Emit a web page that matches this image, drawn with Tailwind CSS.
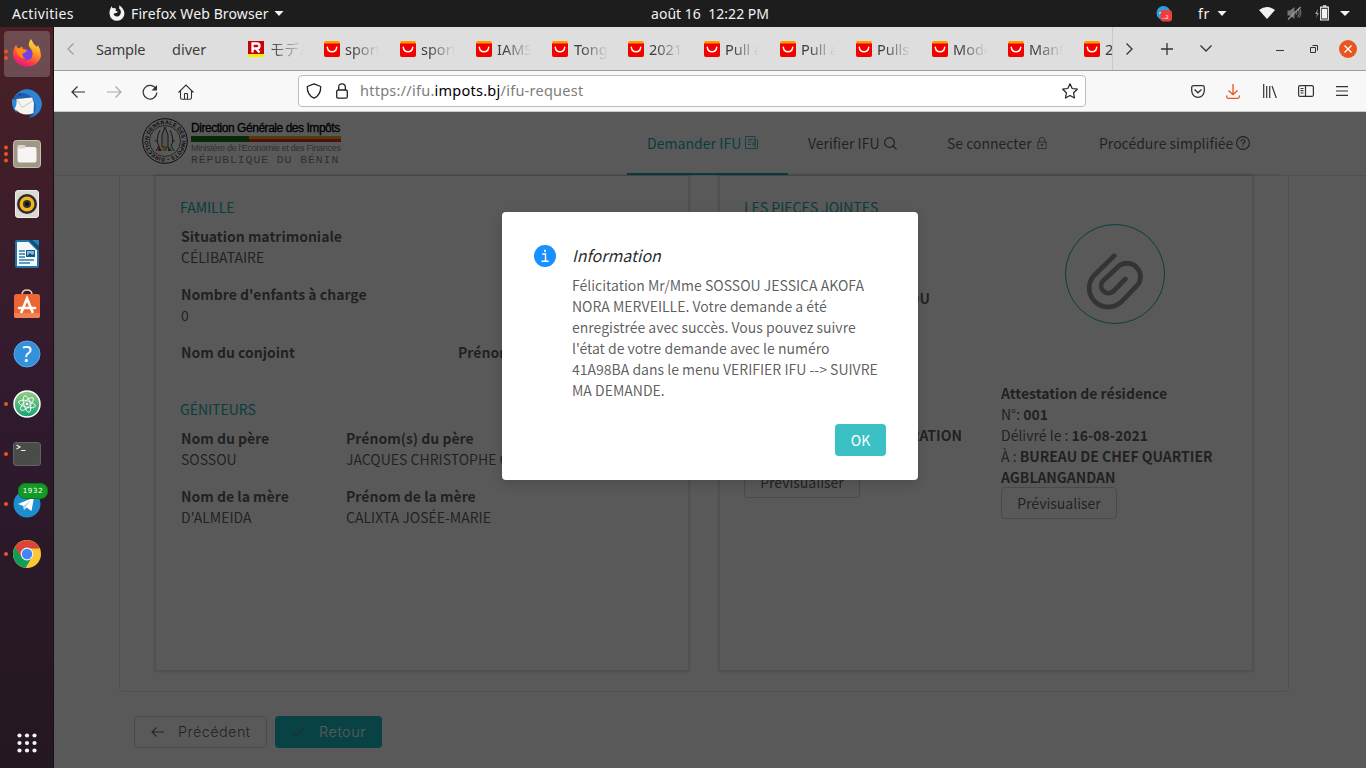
<!DOCTYPE html>
<html lang="fr">
<head>
<meta charset="utf-8">
<title>ifu-request</title>
<script src="https://cdn.jsdelivr.net/npm/@tailwindcss/browser@4"></script>
</head>
<body class="w-[1366px] h-[768px] overflow-hidden flex flex-col bg-[#595959] font-['Noto_Sans','Noto_Sans_CJK_JP',sans-serif]">
<svg class="hidden">
  <symbol id="ali" viewBox="0 0 16 16"><rect width="16" height="16" rx="2" fill="#ff9a00"/><path d="M0 2.500H16V14a2 2 0 0 1-2 2H2a2 2 0 0 1-2-2Z" fill="#f20000"/><path d="M3.300 6.300C4 12.200 12 12.200 12.700 6.300" fill="none" stroke="#fff" stroke-width="1.500" stroke-linecap="round"/></symbol>
</svg>

<!-- system bar -->
<header class="h-[27px] shrink-0 bg-[#1d1d1d] text-[#f2f2f2] text-[14px] leading-[26px] flex items-center whitespace-nowrap">
  <div class="w-[97px] ml-3 tracking-[0.35px]">Activities</div>
  <svg class="w-4 h-4 mt-[-1px] mr-[6px]" viewBox="0 0 16 16"><path d="M1.500 3.500Q.2 6.300.6 9A7.400 7.100 0 0 0 15.400 8.500C15.500 5.500 13.500 2.500 10.300.2Q10.500 2 10 3.200C12.500 5.500 12.200 8 10.800 10.200C9 12.200 5.500 11.600 4.700 9.500Q4.500 8.300 6 8.200Q8.500 8 8.800 6.500Q6.500 6.400 6.300 5.300L7.300 4Q5.500 2.800 4 3.200Q2.800 2.800 2.700 1Z" fill="#f2f2f2"/></svg>
  <div class="w-[143px] tracking-[0.12px]">Firefox Web Browser</div>
  <svg class="w-[10px] h-[5px]" viewBox="0 0 9 5"><path d="M0 0H9L4.500 5Z" fill="#f2f2f2"/></svg>
  <div class="ml-[367px] w-[505px] whitespace-pre tracking-[0.03px]">août 16  12:22 PM</div>
  <svg class="w-4 h-4" viewBox="0 0 16 16"><circle cx="7.500" cy="7" r="7" fill="#2aa1de"/><rect x="4.500" y="4" width="11.500" height="11.500" rx="3" fill="#f33d3a"/><path d="M3 7.500l2-1" stroke="#fff"/><text x="6" y="12.500" font-size="6" fill="#fff">..2</text></svg>
  <div class="ml-[26px] w-[19px] tracking-[0.6px]">fr</div>
  <svg class="w-[10px] h-[5px]" viewBox="0 0 9 5"><path d="M0 0H9L4.500 5Z" fill="#f2f2f2"/></svg>
  <svg class="ml-[32px] mt-[-1px] w-4 h-3" viewBox="0 0 16 12"><path d="M0 3Q8-3 16 3L8 12Z" fill="#f2f2f2"/></svg>
  <svg class="ml-[12px] mt-[-1px] w-[15px] h-[14px]" viewBox="0 0 15 14"><path d="M.5 4.500H3L7.500 1V13L3 9.500H.5Z" fill="#777"/><path d="M9 5q1.500 2 0 4M10.500 3q3.500 4 0 8M12.500 2q3 5-.5 10" stroke="#666" stroke-width="1.200" fill="none"/><path d="M1 13.500L13.500 1" stroke="#999" stroke-width="1.200"/></svg>
  <svg class="ml-[12px] mt-[-2px] w-[16px] h-4" viewBox="0 0 16 16"><path d="M4 4L1 9h2l-1 4 3-5H3.200Z" fill="#999"/><path d="M6.700 2.200H14.300V15H6.700Z" fill="none" stroke="#f2f2f2" stroke-width="1.200"/><path d="M8 3.800h5V13.500H8Z" fill="#f2f2f2"/><path d="M9 1h3.500" stroke="#f2f2f2" stroke-width="1.500"/></svg>
  <svg class="ml-[10px] w-[10px] h-[5px]" viewBox="0 0 10 5"><path d="M0 0H10L5 5Z" fill="#f2f2f2"/></svg>
</header>

<div class="flex flex-1 min-h-0">
  <!-- dock -->
  <aside class="w-[54px] shrink-0 pt-[2px] bg-linear-to-b from-[#4a2025] via-[#301a2e] to-[#231720] border-r border-[#1c1018] flex flex-col items-center">
    <div class="relative w-[53px] h-[50px] shrink-0 flex items-center justify-center">
      <div class="w-[46px] h-[46px] rounded bg-white/20 flex items-center justify-center">
        <svg class="w-[30px] h-[30px]" viewBox="0 0 30 30"><defs><linearGradient id="fx" x1=".8" y1="0" x2=".3" y2="1"><stop offset="0" stop-color="#fff04a"/><stop offset=".4" stop-color="#ff9a1f"/><stop offset=".75" stop-color="#ff3b47"/><stop offset="1" stop-color="#e0128c"/></linearGradient></defs><path d="M4 6L6 10L10 7.500L11 10L15 11Q15 14 11 15Q13 20 18 18Q23 14 18 9Q15 5 19 0Q21 5 25 8L26 6Q29 11 29 17A14.200 13.500 0 0 1 1 16Q1 10 4 6Z" fill="url(#fx)"/><circle cx="15" cy="15.500" r="5.500" fill="#7542e5"/><path d="M4 10Q8 8 10 10L15 11Q14 14 10.500 14.500Q10 18 14 20Q7 19 5 14Z" fill="#ff8a16"/></svg>
      </div>
      <svg class="absolute left-1 top-[18px] w-1 h-4" viewBox="0 0 4 16"><circle cx="2" cy="4.500" r="2" fill="#e95420"/><circle cx="2" cy="11" r="2" fill="#e95420"/></svg>
    </div>
    <div class="h-[50px] shrink-0 flex items-center"><svg class="w-[30px] h-[30px]" viewBox="0 0 30 30"><path d="M8 3Q12-1 20 1Q30 5 30 16Q29 26 17 29.500Q18 26 21 23L12 9L1 11Q2 6 8 3Z" fill="#1b5fae"/><path d="M0 12Q3 3 12 4Q20 6 23 14Q25 22 20 28Q29 24 30 15Q28 4 19 1Q11-1 7 3Q1 7 0 12Z" fill="#2f83d0"/><path d="M0 10Q-1 19 5 24L4 19L5 11Z" fill="#2d8ad8"/><path d="M4.500 10L20 8.500L22 14L21.500 24Q15 27 8 24L2.500 20Q5 16 4.500 10Z" fill="#f4f4f1"/><path d="M5 10.500L10 18.500L20.500 12" fill="none" stroke="#c4c2be" stroke-width=".9"/><circle cx="8" cy="5.500" r="1" fill="#123c74"/></svg></div>
    <div class="relative w-[53px] h-[50px] shrink-0 flex items-center justify-center"><svg class="w-[28px] h-[28px]" viewBox="0 0 28 28"><rect x=".5" y=".5" width="27" height="27" rx="3" fill="#a09887" stroke="#c6bfb0"/><path d="M4.500 7q0-2 2-2H11l2 2h8.500q2 0 2 2V20q0 2.500-2 2.500H6.500q-2 0-2-2.500Z" fill="#f6f5f3"/><path d="M4.500 8.500V7q0-2 2-2H11l2 2-2 1.500Z" fill="#dcd6ca"/></svg>
      <svg class="absolute left-1 top-[16px] w-1 h-[18px]" viewBox="0 0 4 18"><circle cx="2" cy="2.500" r="2" fill="#e95420"/><circle cx="2" cy="9" r="2" fill="#e95420"/><circle cx="2" cy="15.500" r="2" fill="#e95420"/></svg></div>
    <div class="h-[50px] shrink-0 flex items-center"><svg class="w-[24px] h-[28px]" viewBox="0 0 24 28"><rect x=".5" y=".5" width="23" height="27" rx="2.500" fill="#dcd9d2" stroke="#eee"/><circle cx="12" cy="14" r="10" fill="#2b2b2b"/><circle cx="12" cy="14" r="7.500" fill="#f2b51d"/><circle cx="12" cy="14" r="4" fill="#333"/><circle cx="12" cy="14" r="2" fill="#111"/></svg></div>
    <div class="h-[50px] shrink-0 flex items-center"><svg class="w-[24px] h-[28px]" viewBox="0 0 24 28"><path d="M1 2Q1 1 2 1H14L23 10V26Q23 27 22 27H2Q1 27 1 26Z" fill="#f4f8fa" stroke="#1c77a8" stroke-width="2"/><path d="M14 0H24V11Z" fill="#124c70"/><path d="M17 0H24V6Z" fill="#2584b6"/><path d="M4 11H10M4 14H10M4 17H10M4 20H19M4 23H15" stroke="#2e7ca8" stroke-width="1.500"/><rect x="11.500" y="10.500" width="8" height="6" fill="#7db9d8" stroke="#1a587f"/><path d="M12 16l3-3 2 2 2-1v2Z" fill="#164f73"/></svg></div>
    <div class="h-[50px] shrink-0 flex items-center"><svg class="w-[28px] h-[30px]" viewBox="0 0 28 30"><path d="M9 6Q9 1 14 1T19 6" fill="none" stroke="#dfcdb0" stroke-width="1.500"/><rect x="1" y="5" width="26" height="24" rx="2.500" fill="#ec6532"/><path d="M1 24H27V27Q27 29 25 29H3Q1 29 1 27Z" fill="#f08255"/><path d="M8.500 23L14 9.500L19.500 23M6 19H22" fill="none" stroke="#fff" stroke-width="2.600" stroke-linecap="round"/></svg></div>
    <div class="h-[50px] shrink-0 flex items-center"><svg class="w-[28px] h-[28px]" viewBox="0 0 28 28"><circle cx="14" cy="14" r="13" fill="#3391dc" stroke="#5aa9e6"/><text x="14" y="22" font-size="22" text-anchor="middle" fill="#fff">?</text></svg></div>
    <div class="relative w-[53px] h-[50px] shrink-0 flex items-center justify-center"><svg class="w-[28px] h-[28px]" viewBox="0 0 28 28"><defs><linearGradient id="at" x1="0" y1="0" x2="0" y2="1"><stop stop-color="#97cd83"/><stop offset="1" stop-color="#14a376"/></linearGradient></defs><circle cx="14" cy="14" r="13" fill="url(#at)" stroke="#fff" stroke-width="1.500"/><g fill="none" stroke="#fff" stroke-width=".9"><ellipse cx="14" cy="14" rx="8.500" ry="3.200" transform="rotate(15 14 14)"/><ellipse cx="14" cy="14" rx="8.500" ry="3.200" transform="rotate(75 14 14)"/><ellipse cx="14" cy="14" rx="8.500" ry="3.200" transform="rotate(135 14 14)"/></g><circle cx="14" cy="14" r="1.300" fill="#fff"/></svg><i class="absolute left-1 top-[23px] w-1 h-1 rounded-full bg-[#e95420]"></i></div>
    <div class="relative w-[53px] h-[50px] shrink-0 flex items-center justify-center"><svg class="w-[28px] h-[24px]" viewBox="0 0 28 24"><rect x=".5" y=".5" width="27" height="23" rx="2.500" fill="#4a4c49" stroke="#60625f"/><path d="M3.500 3L7 5L3.500 7M8 8.500H12.500" fill="none" stroke="#eee" stroke-width="1.200"/></svg><i class="absolute left-1 top-[23px] w-1 h-1 rounded-full bg-[#e95420]"></i></div>
    <div class="relative w-[53px] h-[50px] shrink-0 flex items-center justify-center"><svg class="w-[28px] h-[28px]" viewBox="0 0 28 28"><circle cx="14" cy="14" r="13.500" fill="#1d8fd0"/><path d="M5 14L21 7.500L18.500 21L13.500 17.500L11 20L10.500 16Z" fill="#fff"/><path d="M10.500 16L18 10L12.500 17L11 20Z" fill="#b8d8ea"/></svg><i class="absolute left-1 top-[23px] w-1 h-1 rounded-full bg-[#e95420]"></i>
      <div class="absolute left-[18px] top-[4px] w-[30px] h-[16px] rounded-[7px] bg-[#149a24] border border-[#0c7a18] text-white text-[7px] leading-[15px] text-center tracking-[0.7px] font-['DejaVu_Sans',sans-serif]">1932</div></div>
    <div class="relative w-[53px] h-[50px] shrink-0 flex items-center justify-center"><svg class="w-[28px] h-[28px]" viewBox="0 0 28 28"><circle cx="14" cy="14" r="14" fill="#fbc734"/><path d="M1.900 7A14 14 0 0 1 26.100 7.200L26.500 8.500H14L8 18Z" fill="#dc4437"/><path d="M1.900 7A14 14 0 0 0 12.500 27.900L19 17L8.500 17Z" fill="#109d58"/><circle cx="14" cy="14" r="6.400" fill="#f1f1f1"/><circle cx="14" cy="14" r="5.200" fill="#4285f4"/></svg><i class="absolute left-1 top-[23px] w-1 h-1 rounded-full bg-[#e95420]"></i></div>
    <svg class="mt-auto mb-[15px] w-5 h-5" viewBox="0 0 20 20" fill="#f4f4f4"><circle cx="2.500" cy="2.500" r="2.100"/><circle cx="10" cy="2.500" r="2.100"/><circle cx="17.500" cy="2.500" r="2.100"/><circle cx="2.500" cy="10" r="2.100"/><circle cx="10" cy="10" r="2.100"/><circle cx="17.500" cy="10" r="2.100"/><circle cx="2.500" cy="17.500" r="2.100"/><circle cx="10" cy="17.500" r="2.100"/><circle cx="17.500" cy="17.500" r="2.100"/></svg>
  </aside>

  <div class="flex-1 min-w-0 flex flex-col">
    <!-- tab strip -->
    <div class="h-[44px] shrink-0 bg-[#dedede] border-b border-[#9e9e9e] flex items-center text-[14.500px] text-[#3d3d3d] whitespace-nowrap">
      <svg class="ml-[13px] w-[7px] h-3" viewBox="0 0 7 12"><path d="M6.500.5L1 6L6.500 11.500" fill="none" stroke="#9a9a9a" stroke-width="1.200"/></svg>
      <div class="ml-[22px] mt-[2px] w-[76px] text-[14.5px] tracking-[-0.2px]">Sample</div>
      <div class="w-[76px] mt-[2px] text-[14.5px]">diver</div>
      <div class="w-[865px] h-full flex items-center overflow-hidden border-r border-[#c8c8c8] text-[14.5px]">
        <div class="w-[76px] shrink-0 flex items-center"><svg class="w-4 h-4 shrink-0" viewBox="0 0 16 16"><path d="M0 0H16V13H0Z" fill="#c8000a"/><path d="M0 13H16V16H0Z" fill="#f7ef00"/><path d="M4.500 11.500V2.500H9Q11.500 2.500 11.500 5T9 7.500H5M8 7.500L11.500 11.500" fill="none" stroke="#fff" stroke-width="2.300"/></svg><div class="ml-[6px] mt-[2px] w-[34px] overflow-hidden mask-r-from-0%">モデル</div></div>
        <div class="w-[76px] shrink-0 flex items-center"><svg class="w-4 h-4 shrink-0"><use href="#ali"/></svg><div class="ml-[5px] mt-[2px] w-[34px] overflow-hidden mask-r-from-20%">sport</div></div>
        <div class="w-[76px] shrink-0 flex items-center"><svg class="w-4 h-4 shrink-0"><use href="#ali"/></svg><div class="ml-[5px] mt-[2px] w-[34px] overflow-hidden mask-r-from-20%">sport</div></div>
        <div class="w-[76px] shrink-0 flex items-center"><svg class="w-4 h-4 shrink-0"><use href="#ali"/></svg><div class="ml-[5px] mt-[2px] w-[34px] overflow-hidden mask-r-from-20%">IAMS</div></div>
        <div class="w-[76px] shrink-0 flex items-center"><svg class="w-4 h-4 shrink-0"><use href="#ali"/></svg><div class="ml-[6px] mt-[2px] w-[34px] overflow-hidden mask-r-from-20%">Tong</div></div>
        <div class="w-[76px] shrink-0 flex items-center"><svg class="w-4 h-4 shrink-0"><use href="#ali"/></svg><div class="ml-[5px] mt-[2px] w-[34px] overflow-hidden mask-r-from-20%">2021</div></div>
        <div class="w-[76px] shrink-0 flex items-center"><svg class="w-4 h-4 shrink-0"><use href="#ali"/></svg><div class="ml-[5px] mt-[2px] w-[34px] overflow-hidden mask-r-from-20%">Pull a</div></div>
        <div class="w-[76px] shrink-0 flex items-center"><svg class="w-4 h-4 shrink-0"><use href="#ali"/></svg><div class="ml-[5px] mt-[2px] w-[34px] overflow-hidden mask-r-from-20%">Pull a</div></div>
        <div class="w-[76px] shrink-0 flex items-center"><svg class="w-4 h-4 shrink-0"><use href="#ali"/></svg><div class="ml-[5px] mt-[2px] w-[34px] overflow-hidden mask-r-from-20%">Pulls</div></div>
        <div class="w-[76px] shrink-0 flex items-center"><svg class="w-4 h-4 shrink-0"><use href="#ali"/></svg><div class="ml-[5px] mt-[2px] w-[34px] overflow-hidden mask-r-from-20%">Mode</div></div>
        <div class="w-[76px] shrink-0 flex items-center"><svg class="w-4 h-4 shrink-0"><use href="#ali"/></svg><div class="ml-[5px] mt-[2px] w-[34px] overflow-hidden mask-r-from-20%">Mant</div></div>
        <div class="w-[76px] shrink-0 flex items-center"><svg class="w-4 h-4 shrink-0"><use href="#ali"/></svg><div class="ml-[5px] mt-[2px] w-[34px]">2</div></div>
      </div>
      <svg class="ml-[13px] w-[7px] h-3" viewBox="0 0 7 12"><path d="M.5.5L6 6L.5 11.500" fill="none" stroke="#333" stroke-width="1.300"/></svg>
      <svg class="ml-[28px] w-3 h-3" viewBox="0 0 12 12"><path d="M6 0V12M0 6H12" stroke="#333" stroke-width="1.300"/></svg>
      <svg class="ml-[27px] w-3 h-[7px]" viewBox="0 0 12 7"><path d="M.5.5L6 6L11.500.5" fill="none" stroke="#333" stroke-width="1.300"/></svg>
      <svg class="ml-[64px] mt-[5px] w-2 h-2" viewBox="0 0 8 8"><path d="M0 3.500H8" stroke="#333"/></svg>
      <svg class="ml-[26px] w-2 h-2" viewBox="0 0 8 8"><path d="M.5 2.500H5.500V7.500H.5ZM2.500.5H7.500V5.500" fill="none" stroke="#333"/></svg>
      <svg class="ml-[21px] w-[18px] h-[18px]" viewBox="0 0 18 18"><circle cx="9" cy="9" r="9" fill="#e95420"/><path d="M5.500 5.500L12.500 12.500M12.500 5.500L5.500 12.500" stroke="#fff" stroke-width="1.400"/></svg>
    </div>
    <!-- toolbar -->
    <div class="h-[41px] shrink-0 bg-[#f8f8f8] border-b border-[#c9cccd] flex items-center">
      <svg class="ml-[17px] mt-px w-[15px] h-3" viewBox="0 0 15 12" fill="none" stroke="#333" stroke-width="1.200"><path d="M6.500.5L1 6L6.500 11.500M1 6H14"/></svg>
      <svg class="ml-[21px] mt-px w-[15px] h-3" viewBox="0 0 15 12" fill="none" stroke="#aaa" stroke-width="1.200"><path d="M8.500.5L14 6L8.500 11.500M14 6H0"/></svg>
      <svg class="ml-[20px] mt-px w-4 h-4" viewBox="0 0 16 16"><path d="M14 5A6.800 6.800 0 1 0 14.800 8.500" fill="none" stroke="#333" stroke-width="1.200"/><path d="M15 1V6.500H9.500Z" fill="#333"/></svg>
      <svg class="ml-[20px] mt-px w-4 h-4" viewBox="0 0 16 16" fill="none" stroke="#333" stroke-width="1.100"><path d="M.5 8.500L8 1L15.500 8.500M2.500 7V13.500Q2.500 15.300 4.300 15.300H11.700Q13.500 15.300 13.500 13.500V7M6.500 15V10Q6.500 9.500 7 9.500H9Q9.500 9.500 9.500 10V15"/></svg>
      <div class="ml-[104px] w-[788px] h-[32px] rounded bg-white border border-[#bdbdbd] flex items-center">
        <svg class="ml-[7px] w-4 h-4" viewBox="0 0 16 16" fill="none" stroke="#222" stroke-width="1.300"><path d="M8 .8L14.700 3.500Q15 12 8 15.200Q1 12 1.300 3.500Z" stroke-linejoin="round"/></svg>
        <svg class="ml-[14px] w-3 h-4" viewBox="0 0 12 16" fill="none" stroke="#222" stroke-width="1.300"><rect x=".7" y="7" width="10.600" height="8.200" rx="1.500"/><path d="M2.700 7V4Q2.700.8 6 .8T9.300 4V7"/></svg>
        <div class="ml-[12px] w-[700px] text-[14.5px] tracking-[0.25px] text-[#7d7d7d] whitespace-nowrap">https://ifu.<span class="text-black">impots.bj</span>/ifu-request</div>
        <svg class="ml-[2px] w-4 h-4" viewBox="0 0 16 16" fill="none" stroke="#222" stroke-width="1.200" stroke-linejoin="round"><path d="M8 .8L10.200 5.500L15.300 6.200L11.600 9.800L12.500 15L8 12.500L3.500 15L4.400 9.800L.7 6.200L5.800 5.500Z"/></svg>
      </div>
      <svg class="ml-[105px] w-[14px] h-[13px]" viewBox="0 0 14 13" fill="none" stroke="#333" stroke-width="1.300"><path d="M2.500.7H11.500Q13.300.7 13.300 2.500V6Q12.500 12.200 7 12.300Q1.500 12.200.7 6V2.500Q.7.7 2.500.7ZM3.500 4.500L7 7.800L10.500 4.500"/></svg>
      <svg class="ml-[21px] w-[14px] h-[15px]" viewBox="0 0 14 15" fill="none" stroke="#e95420" stroke-width="1.300"><path d="M7 0V10.500M2.500 6.500L7 10.700L11.500 6.500M.7 11.500V12.800Q.7 14.300 2.200 14.300H11.800Q13.300 14.300 13.300 12.800V11.500"/></svg>
      <svg class="ml-[23px] w-[14px] h-[14px]" viewBox="0 0 14 14" fill="none" stroke="#333" stroke-width="1.200"><path d="M.7 0V14M3.700 2V14M6.700 2V14M9 2L13.300 14"/></svg>
      <svg class="ml-[21px] w-4 h-3" viewBox="0 0 16 12" fill="none" stroke="#333" stroke-width="1.200"><rect x=".6" y=".6" width="14.800" height="10.800" rx="1.500"/><path d="M7.500.5V11.500M2.500 3.500H5.500M2.500 5.700H5.500M2.500 8H5.500"/></svg>
      <svg class="ml-[22px] w-3 h-[10px]" viewBox="0 0 12 10"><path d="M0 .7H12M0 5H12M0 9.300H12" stroke="#333" stroke-width="1.200"/></svg>
    </div>

    <!-- web page -->
    <div class="relative flex-1 min-h-0 bg-white overflow-hidden flex flex-col text-[14px] leading-[21px] text-black/65 whitespace-nowrap font-['Noto_Sans_CJK_JP',sans-serif]">
      <div class="h-[64px] shrink-0 border-b border-[#e2e2e2] flex">
        <div class="ml-[88px] mt-[6px] h-[47px] w-[485px] flex">
          <svg class="w-[46px] h-[46px]" viewBox="0 0 46 46"><circle cx="23" cy="23" r="22.300" fill="none" stroke="#222"/><circle cx="23" cy="23" r="15.500" fill="none" stroke="#444" stroke-width=".8"/><defs><path id="ring" d="M23 39.800A16.800 16.800 0 1 1 23.200 39.800"/></defs><text font-size="5.300" font-weight="700" fill="#222" font-family="Liberation Sans" textLength="103"><textPath href="#ring" textLength="103">DIRECTION GENERALE DES IMPOTS •</textPath></text><path d="M23 9L20 17V28L23 33L26 28V17ZM18 12Q13 22 17 28L14 33M28 12Q33 22 29 28L32 33" fill="#eee" stroke="#444"/><path d="M17 28l3 5h-4Z" fill="#b22"/><path d="M21 28h4l-1 5h-3Z" fill="#cb3"/><path d="M26 28l4 5h-4Z" fill="#283"/><path d="M13 23h3M30 23h3" stroke="#b22"/></svg>
          <div class="ml-[3px] w-[150px] flex flex-col font-['Liberation_Sans',sans-serif]">
            <div class="h-[19px] text-[12px] leading-[20px] text-black tracking-[-0.46px] [-webkit-text-stroke:0.3px_black]">Direction Générale des Impôts</div>
            <div class="h-[6px] mt-[-1px] flex"><div class="w-[58px] bg-[#1c7a1c]"></div><div class="flex-1 bg-[#e33030] border-t-3 border-[#e8b020]"></div></div>
            <div class="h-[11px] mt-[1px] text-[9px] leading-[11px] text-black/50 tracking-[-0.3px]">Ministère de l'Economie et des Finances</div>
            <div class="h-[11px] text-[11.5px] leading-[11px] text-black/50 tracking-[0.9px] font-['Liberation_Mono',monospace]">RÉPUBLIQUE DU BÉNIN</div>
          </div>
        </div>
        <nav class="h-[63px] flex leading-[64px]">
          <div class="w-[161px] pl-5 border-b-2 border-[#17b0b5] text-[#17b0b5] flex items-center"><span class="w-[98px] tracking-[0.05px]">Demander IFU</span><svg class="w-[13px] h-[13px]" viewBox="0 0 13 13" fill="none" stroke="currentColor" stroke-width=".8"><path d="M10 9V.5H.5V12.500H12.500V3M10 12V3M3 3.500H8M3 6H6M3 8.500H6M8 6V10"/></svg></div>
          <div class="w-[139px] pl-5 border-b border-[#e8e8e8] flex items-center"><span class="w-[76px]">Verifier IFU</span><svg class="w-[13px] h-[13px]" viewBox="0 0 13 13" fill="none" stroke="currentColor" stroke-width="1.100"><circle cx="5.500" cy="5.500" r="4.900"/><path d="M9 9L12.500 12.500"/></svg></div>
          <div class="w-[152px] pl-5 border-b border-[#e8e8e8] flex items-center"><span class="w-[90px]">Se connecter</span><svg class="w-[10px] h-[12px]" viewBox="0 0 10 13" fill="none" stroke="currentColor" stroke-width=".8"><path d="M.5 5.500H9.500V12.500H.5ZM2 5.500V3Q2 .5 5 .5T8 3V5.500M5 7.500V10M3.500 8.500h3"/></svg></div>
          <div class="w-[201px] pl-5 border-b border-[#e8e8e8] flex items-center"><span class="w-[137px]">Procédure simplifiée</span><svg class="w-[14px] h-[14px]" viewBox="0 0 14 14" fill="none" stroke="currentColor" stroke-width="1.100"><circle cx="7" cy="7" r="6.400"/><path d="M5 5.500Q5 3.700 7 3.700T9 5.500Q9 6.700 7 7.300V8.500M7 9.500V10.800"/></svg></div>
        </nav>
      </div>

      <main class="ml-[65px] w-[1170px] h-[516px] shrink-0 px-[36px] border border-t-0 border-[#e8e8e8] rounded-b-[4px] flex gap-[32px]">
        <section class="w-[532px] h-[494px] pl-[24px] pt-[21px] shadow-[0_0_2px_2px_rgba(0,0,0,0.12)]">
          <h3 class="text-[#17b0b5]">FAMILLE</h3>
          <div class="mt-[8px] pl-px"><b>Situation matrimoniale</b><p>CÉLIBATAIRE</p></div>
          <div class="mt-4 pl-px"><b>Nombre d'enfants à charge</b><p>0</p></div>
          <div class="mt-4 pl-px flex"><b class="w-[277px]">Nom du conjoint</b><b>Prénom</b></div>
          <h3 class="mt-[36px] text-[#17b0b5]">GÉNITEURS</h3>
          <div class="mt-[8px] pl-px flex"><div class="w-[165px]"><b>Nom du père</b><p>SOSSOU</p></div><div><b>Prénom(s) du père</b><p>JACQUES CHRISTOPHE C</p></div></div>
          <div class="mt-4 pl-px flex"><div class="w-[165px]"><b>Nom de la mère</b><p>D'ALMEIDA</p></div><div><b>Prénom de la mère</b><p>CALIXTA JOSÉE-MARIE</p></div></div>
        </section>
        <section class="w-[532px] h-[494px] pl-[24px] pt-[21px] shadow-[0_0_2px_2px_rgba(0,0,0,0.12)]">
          <h3 class="text-[#17b0b5]">LES PIECES JOINTES</h3>
          <div class="mt-[6px] h-[164px] flex">
            <div class="w-[186px] pt-[64px] text-right"><b>SOSSOU</b></div>
            <svg class="ml-[135px] w-[100px] h-[100px]" viewBox="0 0 100 100" fill="none"><circle cx="50" cy="50" r="49.500" stroke="#17b0b5"/><path d="M49.300 31.700L29.300 51.200A19 19 0 0 0 56.100 78.100L71.500 62.200A13.400 13.400 0 0 0 52.500 43.200L37.800 57.100A7.400 7.400 0 0 0 48.200 67.500L60.300 55" stroke="#959595" stroke-width="4.800" stroke-linecap="round"/></svg>
          </div>
          <div class="flex mt-[-5px]">
            <div class="w-[257px] pt-[42px]"><b class="block w-[218px] text-right">DÉCLARATION</b><div class="mt-[20px] w-[116px] h-8 rounded border border-[#d4d4d4] text-center leading-[30px]">Prévisualiser</div></div>
            <div><b>Attestation de résidence</b><p>N°: <b>001</b></p><p>Délivré le : <b>16-08-2021</b></p><p>À : <b>BUREAU DE CHEF QUARTIER</b></p><b class="block">AGBLANGANDAN</b><div class="-mt-px w-[116px] h-8 rounded border border-[#d4d4d4] text-center leading-[30px]">Prévisualiser</div></div>
          </div>
        </section>
      </main>
      <div class="ml-[80px] mt-[24px] flex gap-2 text-[14.5px] leading-[30px] font-['Inter',sans-serif] font-light">
        <div class="w-[133px] h-8 rounded border border-[#d4d4d4] flex items-center pl-4"><svg class="w-[13px] h-[10px] mr-[14px]" viewBox="0 0 13 10" fill="none" stroke="#666" stroke-width="1.100"><path d="M5.500.5L1 5L5.500 9.500M1 5H13"/></svg><span class="tracking-[0.4px]">Précédent</span></div>
        <div class="w-[107px] h-8 rounded bg-[#1cbcc5] flex items-center pl-[17px] text-white"><svg class="w-[13px] h-[10px] mr-[14px]" viewBox="0 0 13 10" fill="none" stroke="#777" stroke-width="1.100"><path d="M.5 5L4 9L12.500.5"/></svg><span class="tracking-[0.5px]">Retour</span></div>
      </div>

      <!-- modal over the dimmed page -->
      <div class="absolute inset-0 bg-black/65">
        <div class="absolute left-[448px] top-[100px] w-[416px] h-[268px] rounded-[4px] bg-white pt-8 px-8 shadow-[0_4px_12px_rgba(0,0,0,0.15)] flex gap-4">
          <svg class="mt-px w-[22px] h-[22px] shrink-0" viewBox="0 0 22 22"><circle cx="11" cy="11" r="11" fill="#1890ff"/><path d="M8.300 9H11.500V16M7.500 16.200H14.700" fill="none" stroke="#fff" stroke-width="1.400"/><rect x="10" y="4.800" width="2" height="2" fill="#fff"/></svg>
          <div class="w-[314px] flex flex-col">
            <h2 class="h-6 text-[16px] leading-[22px] italic text-black/85">Information</h2>
            <p class="mt-[7px] whitespace-nowrap">Félicitation Mr/Mme SOSSOU JESSICA AKOFA<br>NORA MERVEILLE. Votre demande a été<br>enregistrée avec succès. Vous pouvez suivre<br>l'état de votre demande avec le numéro<br>41A98BA dans le menu VERIFIER IFU --&gt; SUIVRE<br>MA DEMANDE.</p>
            <div class="mt-[23px] self-end w-[51px] h-8 rounded bg-[#3bc0c4] text-white text-center leading-[32px]">OK</div>
          </div>
        </div>
      </div>
    </div>
  </div>
</div>
</body>
</html>
